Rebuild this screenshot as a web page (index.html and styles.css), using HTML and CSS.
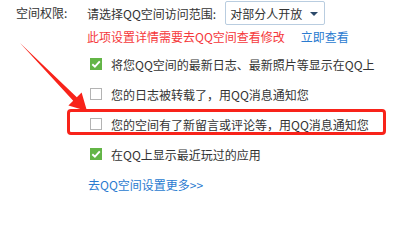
FILE: index.html
```html
<!DOCTYPE html>
<html lang="zh-CN">
<head>
<meta charset="utf-8">
<link rel="stylesheet" href="styles.css">
</head>
<body>
<div class="page">
  <div class="label">空间权限:</div>
  <div class="content">
    <div class="head">
      <span>请选择QQ空间访问范围:</span>
      <div class="select"><span>对部分人开放</span><i class="caret"></i></div>
    </div>
    <div class="notice">
      <span class="warn">此项设置详情需要去QQ空间查看修改</span>
      <a class="link">立即查看</a>
    </div>
    <div class="row"><span class="cb on"><svg viewBox="0 0 12 12"><path d="M2.3 6.2 L4.9 8.7 L9.8 3.4" fill="none" stroke="#fff" stroke-width="1.9"/></svg></span><span>将您QQ空间的最新日志、最新照片等显示在QQ上</span></div>
    <div class="row"><span class="cb"></span><span>您的日志被转载了，用QQ消息通知您</span></div>
    <div class="row mark"><span class="cb"></span><span>您的空间有了新留言或评论等，用QQ消息通知您</span></div>
    <div class="row"><span class="cb on"><svg viewBox="0 0 12 12"><path d="M2.3 6.2 L4.9 8.7 L9.8 3.4" fill="none" stroke="#fff" stroke-width="1.9"/></svg></span><span>在QQ上显示最近玩过的应用</span></div>
    <div class="more"><a class="link">去QQ空间设置更多&gt;&gt;</a></div>
  </div>
</div>
<svg class="arrow" width="394" height="221" viewBox="0 0 394 221">
  <polygon points="20,43 76.8,97.2 81.6,92.6 87,111 68.4,105.4 73.2,100.8" fill="#f8231a"/>
</svg>
</body>
</html>
```
FILE: styles.css
```css
html, body {
  margin: 0;
  padding: 0;
  background: #fff;
}
body {
  width: 394px;
  height: 221px;
  overflow: hidden;
  position: relative;
  font-family: "Noto Sans CJK SC", "Noto Sans", sans-serif;
  font-size: 12px;
  color: #333;
}
.page {
  display: grid;
  grid-template-columns: 71px 1fr;
  padding: 1px 0 0 16px;
}
.label {
  height: 24px;
  line-height: 24px;
}
.content {
  display: flex;
  flex-direction: column;
}
.head {
  display: flex;
  align-items: center;
  gap: 9px;
  height: 24px;
}
.select {
  box-sizing: border-box;
  width: 100px;
  height: 24px;
  border: 1px solid #b9cde0;
  border-radius: 2px;
  display: flex;
  align-items: center;
  justify-content: space-between;
  padding: 0 6px 0 4px;
}
.caret {
  width: 0;
  height: 0;
  border-left: 4px solid transparent;
  border-right: 4px solid transparent;
  border-top: 4px solid #2c4a6a;
  margin-top: 1px;
}
.notice {
  height: 22px;
  padding-bottom: 2px;
  display: flex;
  align-items: center;
  gap: 16px;
}
.warn {
  color: #f5383b;
}
.link {
  color: #2a7bd0;
  cursor: pointer;
}
.row {
  position: relative;
  height: 30px;
  display: flex;
  align-items: center;
  gap: 9px;
  padding-left: 3px;
}
.row.mark::before {
  content: "";
  position: absolute;
  left: -20px;
  right: 8px;
  top: 0;
  bottom: 4px;
  border: 3px solid #f8231a;
  border-radius: 4px;
}
.cb {
  box-sizing: border-box;
  width: 12px;
  height: 12px;
  border: 1px solid #b3b3b3;
  background: #fff;
  display: flex;
  flex: none;
}
.cb.on {
  border: none;
  background: #63b546;
}
.cb svg {
  width: 12px;
  height: 12px;
}
.more {
  height: 30px;
  display: flex;
  align-items: center;
  padding-left: 1px;
}
.arrow {
  position: absolute;
  left: 0;
  top: 0;
  pointer-events: none;
}
```
